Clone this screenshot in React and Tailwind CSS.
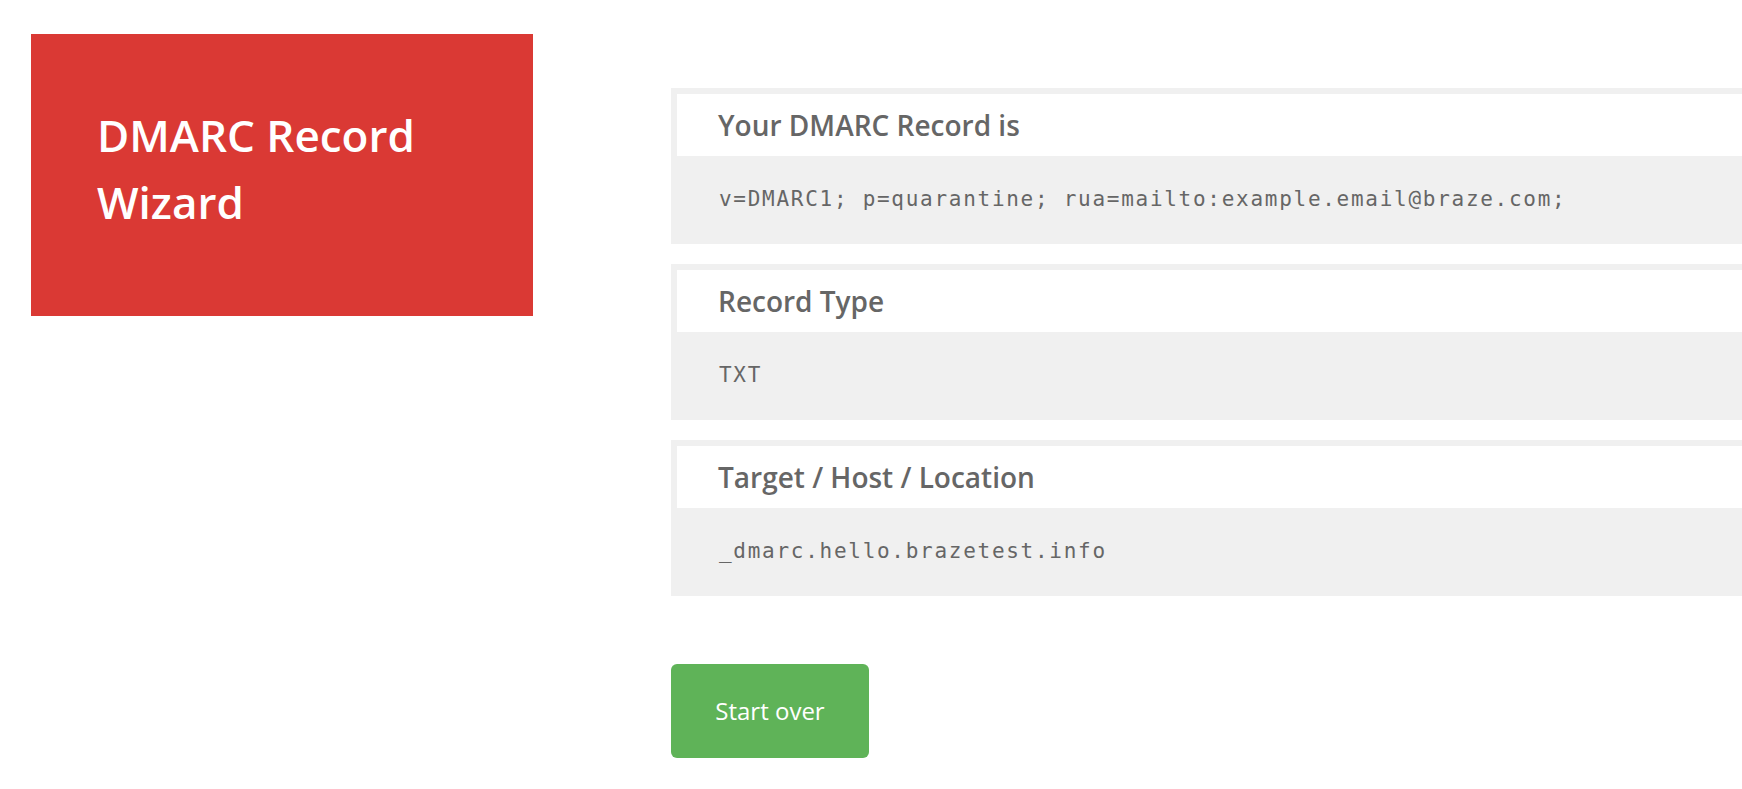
import React from "react";

const records = [
  {
    label: "Your DMARC Record is",
    value: "v=DMARC1; p=quarantine; rua=mailto:example.email@braze.com;",
  },
  { label: "Record Type", value: "TXT" },
  { label: "Target / Host / Location", value: "_dmarc.hello.brazetest.info" },
];

const RecordCard = ({ label, value }) => (
  <div className="bg-[#f0f0f0] pt-[6px] pl-[6px]">
    <div className="h-[62px] bg-white pl-[41px] flex items-center">
      <h4 className="text-[28px] font-semibold text-[#666666] leading-none">
        {label}
      </h4>
    </div>
    <div className="h-[88px] pl-[42px] flex items-center">
      <code
        className="text-[21px] tracking-[1.72px] text-[#666666] whitespace-nowrap"
        style={{ fontFamily: '"DejaVu Sans Mono", "Liberation Mono", monospace' }}
      >
        {value}
      </code>
    </div>
  </div>
);

export default function App() {
  return (
    <div
      className="w-screen h-screen overflow-hidden bg-white flex pl-[31px] pt-[34px]"
      style={{ fontFamily: '"Open Sans", "Noto Sans", sans-serif' }}
    >
      {/* Title block */}
      <div className="w-[502px] h-[282px] shrink-0 bg-[#da3934] pl-[66px] pt-[68px]">
        <h1 className="text-[44px] leading-[67px] font-semibold text-white">
          DMARC Record
          <br />
          Wizard
        </h1>
      </div>

      {/* Result */}
      <div className="flex-1 ml-[138px] pt-[54px] min-w-0">
        <div className="flex flex-col gap-[20px]">
          {records.map((r) => (
            <RecordCard key={r.label} label={r.label} value={r.value} />
          ))}
        </div>
        <button className="mt-[68px] w-[198px] h-[94px] rounded-[6px] bg-[#5fb358] text-white text-[24px]">
          Start over
        </button>
      </div>
    </div>
  );
}
